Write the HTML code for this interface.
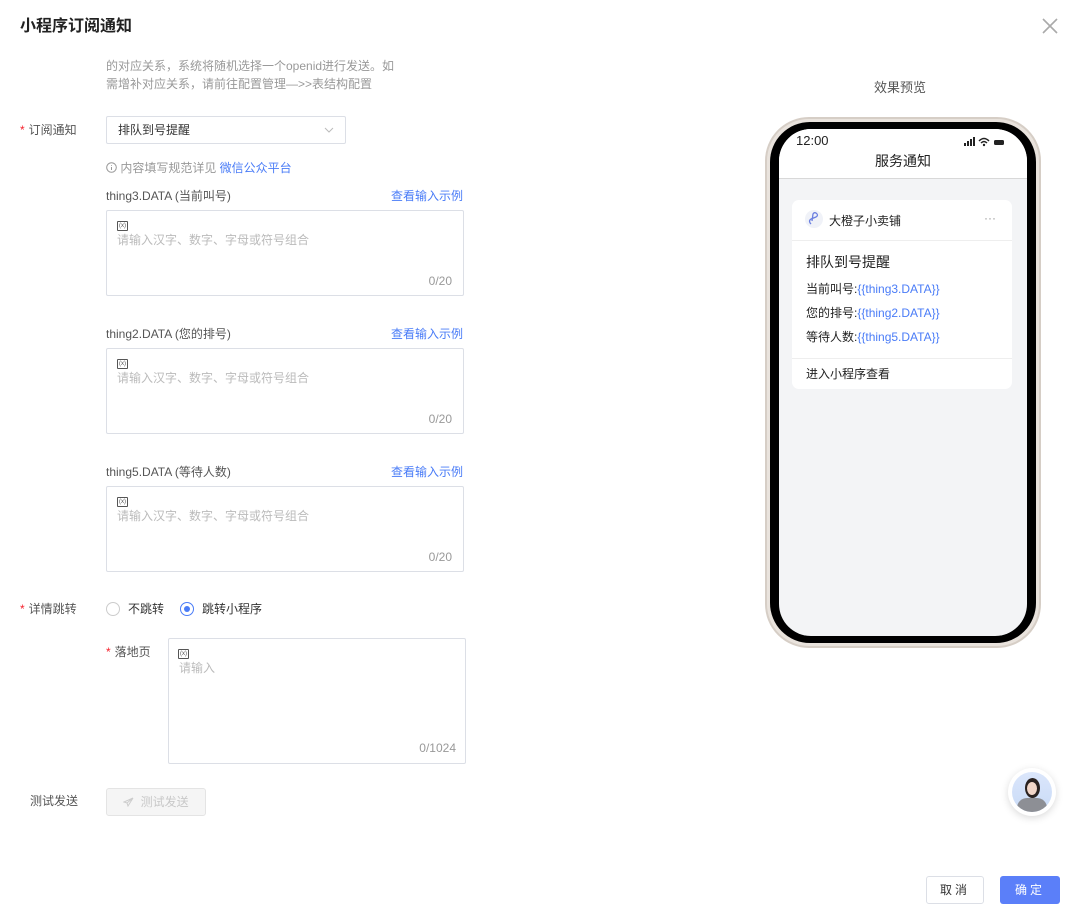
<!DOCTYPE html>
<html><head><meta charset="utf-8"><style>
*{box-sizing:border-box;margin:0;padding:0}
body{width:1075px;height:911px;background:#fff;font-family:"Liberation Sans","Noto Sans CJK SC",sans-serif;font-size:12px;line-height:15px;color:#333;position:relative;overflow:hidden}
.a{position:absolute;white-space:nowrap}
.lbl{color:#555;font-size:12px}
.star{color:#f5222d;margin-right:4px}
.box{position:absolute;border:1px solid #dcdfe6;border-radius:2px;background:#fff}
.ph{color:#bbb;font-size:12px}
.cnt{color:#999;font-size:12px}
.link{color:#4a7cf7}
.vi{width:11px;height:10px;border:1px solid #555;border-radius:1px;font-size:6px;line-height:8px;text-align:center;color:#555}
</style></head><body>
<div class="a" style="left:20px;top:17px;font-size:16px;line-height:20px;font-weight:bold;color:#222">小程序订阅通知</div>
<svg class="a" style="left:1042px;top:18px" width="16" height="16"><path d="M1 1L15 15M15 1L1 15" stroke="#aaa" stroke-width="1.6"/></svg>
<div class="a" style="left:106px;top:57px;color:#999;line-height:18px">的对应关系，系统将随机选择一个openid进行发送。如<br>需增补对应关系，请前往配置管理—>>表结构配置</div>

<div class="a lbl" style="left:20px;top:123px"><span class="star">*</span>订阅通知</div>
<div class="box" style="left:106px;top:116px;width:240px;height:28px"><span class="a" style="left:11px;top:6px;color:#333">排队到号提醒</span>
<svg class="a" style="left:217px;top:9px" width="10" height="8"><path d="M1 2L5 6L9 2" stroke="#bbb" fill="none"/></svg></div>
<div class="a" style="left:106px;top:161px;color:#999"><svg width="11" height="11" style="vertical-align:-1px"><circle cx="5.5" cy="5.5" r="4.8" stroke="#999" fill="none"/><path d="M5.5 3v0.8M5.5 5v3" stroke="#999"/></svg> 内容填写规范详见 <span class="link">微信公众平台</span></div>

<div class="a" style="left:106px;top:189px;color:#555">thing3.DATA (当前叫号)</div>
<div class="a link" style="left:391px;top:189px">查看输入示例</div>
<div class="box" style="left:106px;top:210px;width:358px;height:86px"><div class="a vi" style="left:10px;top:10px">(x)</div><span class="a ph" style="left:10px;top:22px">请输入汉字、数字、字母或符号组合</span><span class="a cnt" style="right:11px;top:63px">0/20</span></div>

<div class="a" style="left:106px;top:327px;color:#555">thing2.DATA (您的排号)</div>
<div class="a link" style="left:391px;top:327px">查看输入示例</div>
<div class="box" style="left:106px;top:348px;width:358px;height:86px"><div class="a vi" style="left:10px;top:10px">(x)</div><span class="a ph" style="left:10px;top:22px">请输入汉字、数字、字母或符号组合</span><span class="a cnt" style="right:11px;top:63px">0/20</span></div>

<div class="a" style="left:106px;top:465px;color:#555">thing5.DATA (等待人数)</div>
<div class="a link" style="left:391px;top:465px">查看输入示例</div>
<div class="box" style="left:106px;top:486px;width:358px;height:86px"><div class="a vi" style="left:10px;top:10px">(x)</div><span class="a ph" style="left:10px;top:22px">请输入汉字、数字、字母或符号组合</span><span class="a cnt" style="right:11px;top:63px">0/20</span></div>

<div class="a lbl" style="left:20px;top:602px"><span class="star">*</span>详情跳转</div>
<div class="a" style="left:106px;top:602px;width:14px;height:14px;border:1px solid #ccc;border-radius:50%"></div>
<div class="a" style="left:128px;top:602px;color:#333">不跳转</div>
<div class="a" style="left:180px;top:602px;width:14px;height:14px;border:1px solid #4a7cf7;border-radius:50%"><div style="width:6px;height:6px;background:#4a7cf7;border-radius:50%;margin:3px"></div></div>
<div class="a" style="left:202px;top:602px;color:#333">跳转小程序</div>

<div class="a lbl" style="left:106px;top:645px"><span class="star">*</span>落地页</div>
<div class="box" style="left:168px;top:638px;width:298px;height:126px"><div class="a vi" style="left:9px;top:10px">(x)</div><span class="a ph" style="left:10px;top:22px">请输入</span><span class="a cnt" style="right:9px;top:102px">0/1024</span></div>

<div class="a lbl" style="left:30px;top:794px">测试发送</div>
<div class="a" style="left:106px;top:788px;width:100px;height:28px;background:#f5f5f5;border:1px solid #e4e4e4;border-radius:3px;color:#c8c8c8;padding:6px 0 0 16px">
<svg width="11" height="10" style="vertical-align:-1px"><path d="M10 1L1 5L4 6L10 1L5 9L4 6" stroke="#ccc" fill="none"/></svg>&nbsp; 测试发送</div>

<div class="a" style="left:874px;top:80px;color:#555;font-size:13px">效果预览</div>
<div class="a" style="left:765px;top:117px;width:276px;height:531px;border-radius:44px;background:#e9e3dd;border:2px solid #d6cec6"></div>
<div class="a" style="left:770px;top:122px;width:266px;height:521px;border-radius:40px;background:#000"></div>
<div class="a" style="left:779px;top:129px;width:248px;height:507px;border-radius:32px;background:#f3f4f6;overflow:hidden">
 <div style="position:absolute;left:0;top:0;width:248px;height:50px;background:#fff;border-bottom:1px solid #d8d8d8"></div>
 <div class="a" style="left:17px;top:4px;font-size:13px;color:#222">12:00</div>
 <svg class="a" style="left:185px;top:8px" width="44" height="10"><rect x="0" y="6" width="2" height="3" fill="#222"/><rect x="3" y="4" width="2" height="5" fill="#222"/><rect x="6" y="2" width="2" height="7" fill="#222"/><rect x="9" y="0" width="2" height="9" fill="#222"/><path d="M15 4Q20 -1 25 4M17 6Q20 3 23 6" stroke="#222" stroke-width="1.5" fill="none"/><circle cx="20" cy="8" r="1.2" fill="#222"/><rect x="30" y="3" width="10" height="5" rx="1.5" fill="#222"/></svg>
 <div class="a" style="left:0;width:248px;text-align:center;top:23px;font-size:14px;line-height:18px;color:#222">服务通知</div>
 <div class="a" style="left:13px;top:71px;width:220px;height:189px;background:#fff;border-radius:7px">
  <div class="a" style="left:13px;top:10px;width:18px;height:18px;border-radius:50%;background:#f0f2f8"></div>
  <svg class="a" style="left:16px;top:12px" width="12" height="14"><path d="M3 12Q0 9 3 7L8 5Q11 3 8 1Q6 0 5 2L4 9" stroke="#6b7fe0" stroke-width="1.3" fill="none"/></svg>
  <div class="a" style="left:37px;top:14px;font-size:12px;color:#222">大橙子小卖铺</div>
  <div class="a" style="left:192px;top:11px;color:#999;font-size:12px">···</div>
  <div class="a" style="left:0;top:40px;width:220px;border-top:1px solid #eee"></div>
  <div class="a" style="left:14px;top:53px;font-size:14px;line-height:18px;color:#222">排队到号提醒</div>
  <div class="a" style="left:14px;top:82px;color:#222">当前叫号:<span class="link">{{thing3.DATA}}</span></div>
  <div class="a" style="left:14px;top:106px;color:#222">您的排号:<span class="link">{{thing2.DATA}}</span></div>
  <div class="a" style="left:14px;top:130px;color:#222">等待人数:<span class="link">{{thing5.DATA}}</span></div>
  <div class="a" style="left:0;top:158px;width:220px;border-top:1px solid #eee"></div>
  <div class="a" style="left:14px;top:167px;color:#222">进入小程序查看</div>
 </div>
</div>

<div class="a" style="left:1008px;top:768px;width:48px;height:48px;border-radius:50%;background:#fff;box-shadow:0 2px 8px rgba(0,0,0,.15)"><div style="margin:4px;width:40px;height:40px;border-radius:50%;background:linear-gradient(#dbe6fb,#c9dbf7);overflow:hidden;position:relative">
<div style="position:absolute;left:13px;top:6px;width:15px;height:20px;border-radius:50%;background:#2a2220"></div>
<div style="position:absolute;left:15px;top:10px;width:10px;height:13px;border-radius:50%;background:#f1d6c8"></div>
<div style="position:absolute;left:5px;top:26px;width:30px;height:20px;border-radius:10px 10px 0 0;background:#8d8f95"></div></div></div>

<div class="a" style="left:926px;top:876px;width:58px;height:28px;border:1px solid #dcdfe6;border-radius:3px;text-align:center;line-height:26px;color:#333;letter-spacing:3px">取消</div>
<div class="a" style="left:1000px;top:876px;width:60px;height:28px;background:#5b7ff9;border-radius:3px;text-align:center;line-height:28px;color:#fff;letter-spacing:3px">确定</div>
</body></html>
